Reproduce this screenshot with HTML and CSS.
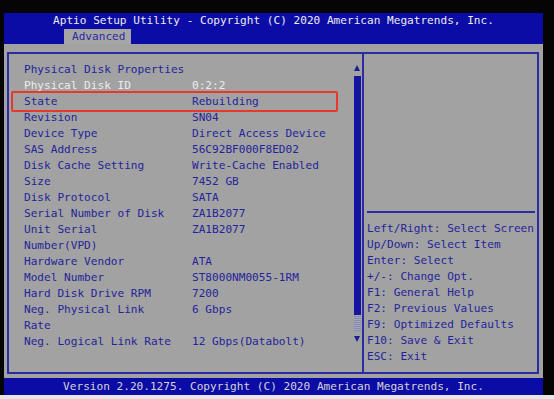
FILE: index.html
```html
<!doctype html>
<html>
  <head>
    <meta charset="UTF-8" />
    <title>Aptio Setup Utility</title>
    <link rel="stylesheet" href="styles.css">
  </head>
  <body>
    <div class="screen">
      <div class="header">
        <div class="title">Aptio Setup Utility - Copyright (C) 2020 American Megatrends, Inc.</div>
        <div class="tabs"><span class="tab">Advanced</span></div>
      </div>
      <div class="main">
        <div class="frame">
          <div class="left">
            <div class="rows">
              <div class="row heading">Physical Disk Properties</div>
              <div class="row dim"><span class="label">Physical Disk ID</span><span class="value">0:2:2</span></div>
              <div class="row"><span class="label">State</span><span class="value">Rebuilding</span></div>
              <div class="row"><span class="label">Revision</span><span class="value">SN04</span></div>
              <div class="row"><span class="label">Device Type</span><span class="value">Direct Access Device</span></div>
              <div class="row"><span class="label">SAS Address</span><span class="value">56C92BF000F8ED02</span></div>
              <div class="row"><span class="label">Disk Cache Setting</span><span class="value">Write-Cache Enabled</span></div>
              <div class="row"><span class="label">Size</span><span class="value">7452 GB</span></div>
              <div class="row"><span class="label">Disk Protocol</span><span class="value">SATA</span></div>
              <div class="row"><span class="label">Serial Number of Disk</span><span class="value">ZA1B2077</span></div>
              <div class="row"><span class="label">Unit Serial Number(VPD)</span><span class="value">ZA1B2077</span></div>
              <div class="row"><span class="label">Hardware Vendor</span><span class="value">ATA</span></div>
              <div class="row"><span class="label">Model Number</span><span class="value">ST8000NM0055-1RM</span></div>
              <div class="row"><span class="label">Hard Disk Drive RPM</span><span class="value">7200</span></div>
              <div class="row"><span class="label">Neg. Physical Link Rate</span><span class="value">6 Gbps</span></div>
              <div class="row"><span class="label">Neg. Logical Link Rate</span><span class="value">12 Gbps(Databolt)</span></div>
            </div>
            <div class="scroll">
              <svg class="arrow" width="6" height="6" viewBox="0 0 6 6"><path d="M3 0 L6 6 L0 6 Z" fill="#1c1c98"/></svg>
              <div class="thumb"></div>
              <div class="track"></div>
              <svg class="arrow" width="6" height="6" viewBox="0 0 6 6"><path d="M0 0 L6 0 L3 6 Z" fill="#1c1c98"/></svg>
            </div>
            <div class="mark"></div>
          </div>
          <div class="right">
            <div class="desc"></div>
            <div class="help">
              <div>Left/Right: Select Screen</div>
              <div>Up/Down: Select Item</div>
              <div>Enter: Select</div>
              <div>+/-: Change Opt.</div>
              <div>F1: General Help</div>
              <div>F2: Previous Values</div>
              <div>F9: Optimized Defaults</div>
              <div>F10: Save &amp; Exit</div>
              <div>ESC: Exit</div>
            </div>
          </div>
        </div>
      </div>
      <div class="footer">Version 2.20.1275. Copyright (C) 2020 American Megatrends, Inc.</div>
    </div>
    <div class="strip"></div>
  </body>
</html>
```

FILE: styles.css
```css
body {
  font-family: "DejaVu Sans Mono", "Liberation Mono", monospace;
  font-size: 11.1px;
  line-height: 16px;
  margin: 0;
  padding: 13px 0 0;
  background: #050505;
  height: 399px;
  box-sizing: border-box;
  display: flex;
  flex-direction: column;
  overflow: hidden;
}
.screen {
  margin-left: 4px;
  width: 539px;
  background: #a2a2a2;
  display: flex;
  flex-direction: column;
}
.header {
  background: #0b0ba6;
  color: #ececec;
}
.title {
  height: 16px;
  text-align: center;
  white-space: nowrap;
}
.tabs {
  height: 15px;
  padding-left: 60px;
}
.tab {
  display: inline-block;
  height: 15px;
  line-height: 15px;
  padding: 0 6px 0 8px;
  background: #a6a6a6;
  color: #2a2aa0;
}
.main {
  height: 334px;
  padding: 8px 4px 4px 3px;
  box-sizing: border-box;
  display: flex;
}
.frame {
  flex: 1;
  border: 2px solid #2c2ca2;
  display: flex;
}
.left {
  width: 353px;
  border-right: 2px solid #2c2ca2;
  display: flex;
  position: relative;
}
.rows {
  flex: 1;
  padding: 8px 0 0 15px;
  color: #24249a;
}
.row {
  display: flex;
}
.heading {
  white-space: nowrap;
}
.label {
  width: 168px;
  padding-right: 20px;
  box-sizing: border-box;
  flex-shrink: 0;
}
.value {
  white-space: nowrap;
}
.dim {
  color: #ececec;
}
.scroll {
  width: 8px;
  margin-right: 1px;
  padding-top: 11px;
  display: flex;
  flex-direction: column;
  align-items: center;
}
.arrow {
  display: block;
}
.thumb {
  width: 7px;
  height: 239px;
  margin-top: 5px;
  background: #1414a0;
}
.track {
  width: 7px;
  height: 16px;
  background: repeating-linear-gradient(0deg, #8888b8 0 1px, #a6a6b4 1px 2px);
}
.scroll .arrow:last-child {
  margin-top: 5px;
}
.mark {
  position: absolute;
  left: 2px;
  top: 37px;
  width: 327px;
  height: 21px;
  border: 2px solid #e8382c;
  border-radius: 2px;
  box-sizing: border-box;
}
.right {
  flex: 1;
  display: flex;
  flex-direction: column;
}
.desc {
  height: 157px;
  margin: 0 2px 0 3px;
  border-bottom: 2px solid #2c2ca2;
}
.help {
  padding: 8px 0 0 3px;
  color: #24249a;
  white-space: nowrap;
}
.footer {
  height: 17px;
  line-height: 17px;
  background: #0b0ba6;
  color: #d4d4d4;
  text-align: center;
  white-space: nowrap;
}
.strip {
  height: 4px;
  margin-top: auto;
  background: #e6e6e6;
}
```
